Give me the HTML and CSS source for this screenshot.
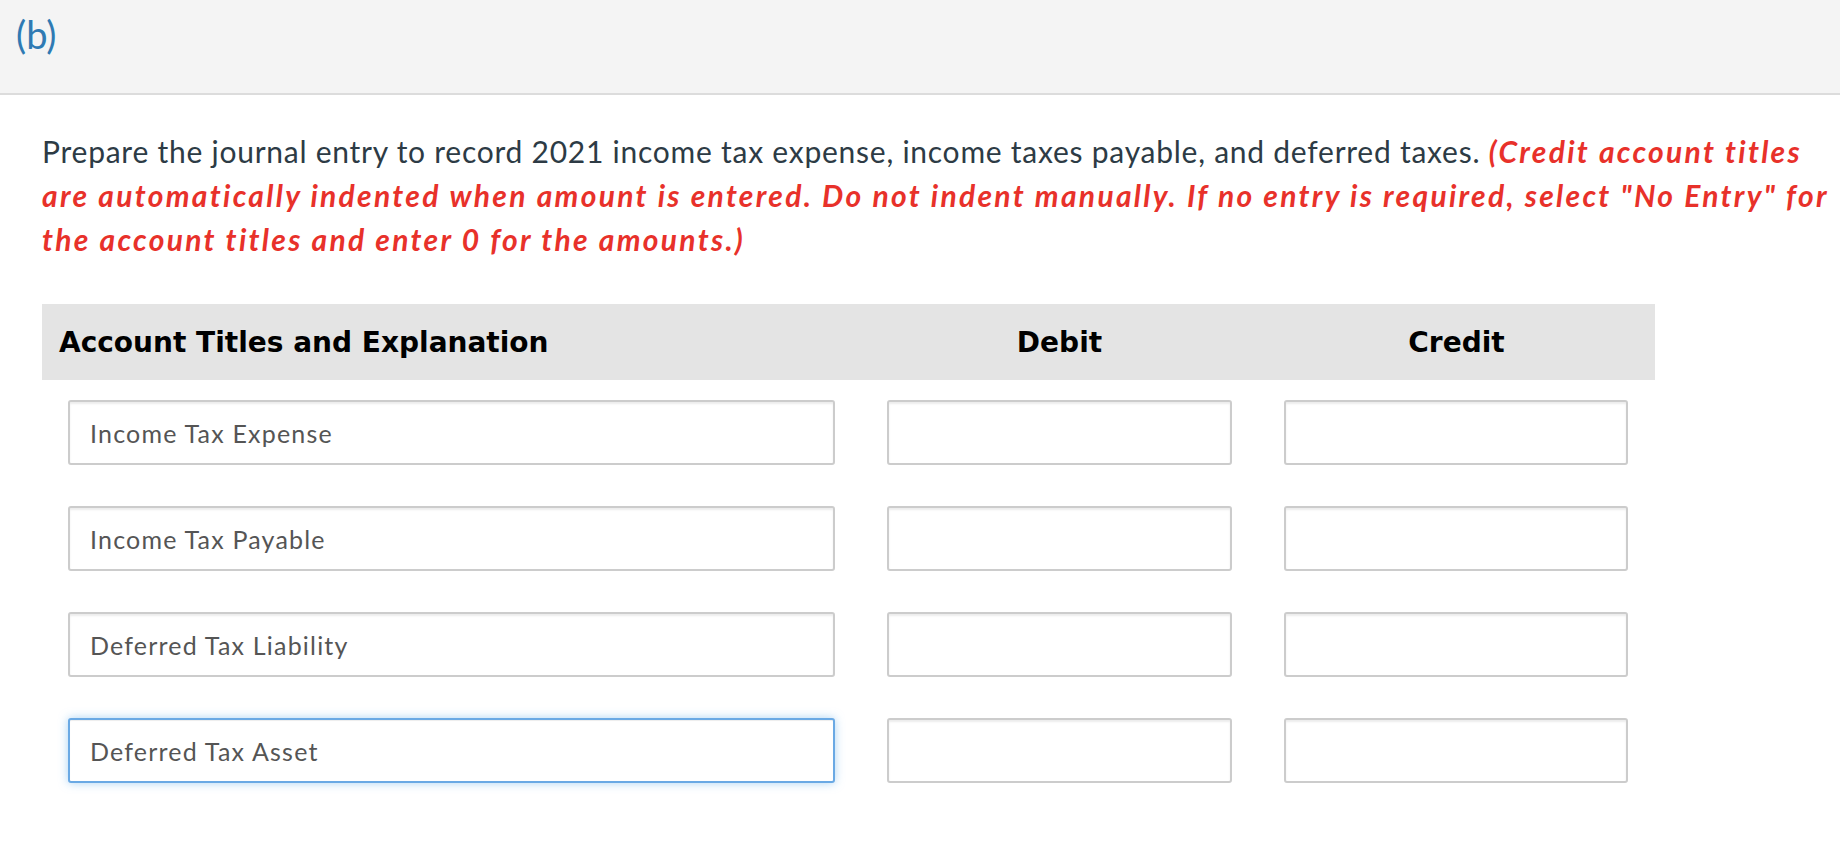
FILE: index.html
```html
<!DOCTYPE html>
<html lang="en">
<head>
<meta charset="utf-8">
<title>Journal entry (b)</title>
<link rel="stylesheet" href="styles.css">
</head>
<body>
  <div class="part-bar"><span class="part-label">(b)</span></div>
  <div class="content">
    <p class="question">Prepare the journal entry to record 2021 income tax expense, income taxes payable, and deferred taxes. <em class="note">(Credit account titles are automatically indented when amount is entered. Do not indent manually. If no entry is required, select "No Entry" for the account titles and enter 0 for the amounts.)</em></p>
    <div class="journal">
      <div class="jrow jhead">
        <div class="cell c-title">Account Titles and Explanation</div>
        <div class="cell c-amt">Debit</div>
        <div class="cell c-amt">Credit</div>
      </div>
      <div class="jrow">
        <div class="cell c-title"><input class="field" type="text" value="Income Tax Expense"></div>
        <div class="cell c-amt"><input class="field" type="text"></div>
        <div class="cell c-amt"><input class="field" type="text"></div>
      </div>
      <div class="jrow">
        <div class="cell c-title"><input class="field" type="text" value="Income Tax Payable"></div>
        <div class="cell c-amt"><input class="field" type="text"></div>
        <div class="cell c-amt"><input class="field" type="text"></div>
      </div>
      <div class="jrow">
        <div class="cell c-title"><input class="field" type="text" value="Deferred Tax Liability"></div>
        <div class="cell c-amt"><input class="field" type="text"></div>
        <div class="cell c-amt"><input class="field" type="text"></div>
      </div>
      <div class="jrow">
        <div class="cell c-title"><input class="field focused" type="text" value="Deferred Tax Asset"></div>
        <div class="cell c-amt"><input class="field" type="text"></div>
        <div class="cell c-amt"><input class="field" type="text"></div>
      </div>
    </div>
  </div>
</body>
</html>
```

FILE: styles.css
```css
* { box-sizing: border-box; }
html, body { margin: 0; padding: 0; background: #fff; }
body { font-family: Lato, "Open Sans", sans-serif; color: #2d3b45; }

.part-bar {
  height: 95px;
  background: #f4f4f4;
  border-bottom: 2px solid #dcdcdc;
  padding: 12px 0 0 16px;
}
.part-label {
  font-family: Lato, sans-serif;
  font-size: 38px;
  line-height: 44px;
  color: #2f7ab3;
}

.content { padding: 34px 6px 0 42px; }

.question {
  margin: 0;
  font-size: 30px;
  line-height: 44px;
  letter-spacing: 0.75px;
  color: #2d3b45;
}
.note {
  font-style: italic;
  font-weight: 700;
  color: #e8312a;
  letter-spacing: 2.3px;
}

.journal { margin-top: 43px; width: 1613px; }
.jrow { display: grid; grid-template-columns: 819px 397px 397px; }
.jhead {
  background: #e4e4e4;
  height: 76px;
  align-items: center;
  font-family: "DejaVu Sans", Verdana, sans-serif;
  font-weight: 700;
  font-size: 28px;
  color: #000;
}
.jhead .c-title { padding-left: 17px; }
.jhead .c-amt { text-align: center; }

.jrow:not(.jhead) .cell { padding: 20px 26px 21px 26px; }
.jrow:not(.jhead) .c-amt:last-child { padding-right: 27px; }

.field {
  display: block;
  width: 100%;
  height: 65px;
  border: 2px solid #cccccc;
  border-radius: 3px;
  background: #fff;
  box-shadow: inset 0 2px 2px rgba(0,0,0,0.075);
  padding: 0 20px;
  font-family: Lato, sans-serif;
  font-size: 25px;
  letter-spacing: 1.2px;
  color: #555;
  outline: none;
}
.field.focused {
  border-color: #6aa9e4;
  box-shadow: inset 0 1px 1px rgba(0,0,0,0.075), 0 0 10px rgba(102,175,233,0.55);
}
```
